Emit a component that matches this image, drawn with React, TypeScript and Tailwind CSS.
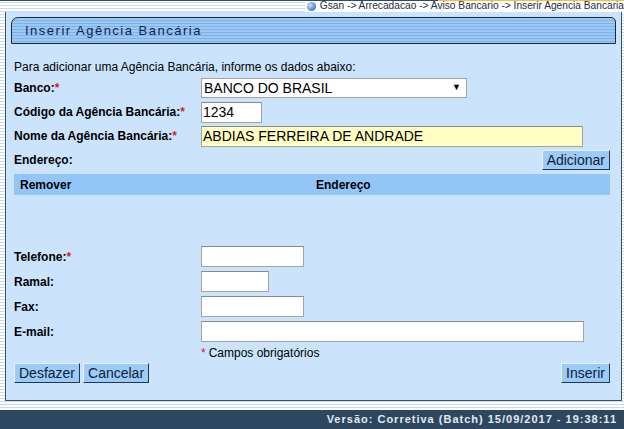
import React from 'react';

const stripes =
  'bg-[repeating-linear-gradient(180deg,#ffffff_0px,#ffffff_2px,#c9dcee_2px,#c9dcee_3px)]';

function Req() {
  return <span className="text-[#e0201c]">*</span>;
}

function Label({ children, req }: { children: React.ReactNode; req?: boolean }) {
  return (
    <div className="w-[187px] shrink-0 text-[12px] font-bold text-black">
      {children}
      {req && <Req />}
    </div>
  );
}

function Field({ w, value, yellow }: { w: string; value?: string; yellow?: boolean }) {
  return (
    <div
      className={`${w} h-[21px] border border-[#a4a4a4] border-t-[#8a8a8a] flex items-center px-[1px] text-[14px] text-black ${
        yellow ? 'bg-[#ffffc4]' : 'bg-white'
      }`}
    >
      {value}
    </div>
  );
}

function Btn({ children }: { children: React.ReactNode }) {
  return (
    <button className="h-[20px] px-[4px] bg-[#9ccbf9] border border-[#e6f2fd] border-r-[#22364c] border-b-[#22364c] text-[14px] leading-none text-[#0c1e33]">
      {children}
    </button>
  );
}

export default function App() {
  return (
    <div
      className={`w-[624px] h-[429px] overflow-hidden flex flex-col ${stripes}`}
      style={{ fontFamily: '"Liberation Sans", Arial, sans-serif' }}
    >
      {/* breadcrumb */}
      <div className="h-[12px] flex">
        <div className="w-[307px] border-t border-[#2e4a62]" />
        <div className="flex-1 bg-white flex items-center relative">
          <div className="absolute left-[133px] right-0 top-0 h-[1px] bg-[#f0c040]" />
          <div className="absolute left-0 w-[133px] top-0 h-[1px] bg-[#2e4a62]" />
          <span className="ml-[2px] w-[9px] h-[9px] shrink-0 rounded-full bg-[radial-gradient(circle_at_35%_35%,#cfe6ff,#3f7cc4_70%)]" />
          <span className="ml-[4px] text-[10.2px] leading-none text-[#1e2e40] whitespace-nowrap">
            Gsan -&gt; Arrecadacao -&gt; Aviso Bancario -&gt; Inserir Agencia Bancaria
          </span>
        </div>
      </div>

      {/* panel */}
      <div className="ml-[5px] w-[617px] h-[389px] bg-[#cbe4fc] border-l border-r border-b border-[#3d4f62] flex flex-col pt-[5px]">
        <div className="ml-[5px] w-[605px] h-[27px] border border-[#1a2840] rounded-tl-[7px] rounded-tr-[5px] bg-[repeating-linear-gradient(180deg,#9cc8f4_0px,#9cc8f4_2px,#7eb2e8_2px,#7eb2e8_3px)] flex items-center pl-[13px]">
          <span className="text-[13px] tracking-[1.5px] text-[#14244a]">Inserir Agência Bancária</span>
        </div>

        <div className="pl-[8px] pr-[11px] flex flex-col">
          <div className="h-[18px] mt-[14px] flex items-center text-[12px] text-black">
            Para adicionar uma Agência Bancária, informe os dados abaixo:
          </div>

          <div className="h-[24px] flex items-center">
            <Label req>Banco:</Label>
            <div className="w-[266px] h-[20px] bg-white border border-[#a4a4a4] flex items-center justify-between pl-[2px] pr-[5px] text-[14px] text-black">
              <span>BANCO DO BRASIL</span>
              <span className="text-[9px]">▼</span>
            </div>
          </div>

          <div className="h-[24px] flex items-center">
            <Label req>Código da Agência Bancária:</Label>
            <Field w="w-[61px]" value="1234" />
          </div>

          <div className="h-[24px] flex items-center">
            <Label req>Nome da Agência Bancária:</Label>
            <Field w="w-[382px]" value="ABDIAS FERREIRA DE ANDRADE" yellow />
          </div>

          <div className="h-[24px] flex items-center justify-between">
            <Label>Endereço:</Label>
            <Btn>Adicionar</Btn>
          </div>

          <div className="mt-[2px] h-[21px] bg-[#92c5f8] flex items-center text-[12px] font-bold text-black">
            <div className="w-[302px] pl-[6px]">Remover</div>
            <div>Endereço</div>
          </div>

          <div className="h-[49px]" />

          <div className="h-[25px] flex items-center">
            <Label req>Telefone:</Label>
            <Field w="w-[103px]" />
          </div>
          <div className="h-[25px] flex items-center">
            <Label>Ramal:</Label>
            <Field w="w-[68px]" />
          </div>
          <div className="h-[25px] flex items-center">
            <Label>Fax:</Label>
            <Field w="w-[103px]" />
          </div>
          <div className="h-[25px] flex items-center">
            <Label>E-mail:</Label>
            <Field w="w-[383px]" />
          </div>

          <div className="h-[17px] flex items-center pl-[187px] text-[12px] text-black">
            <Req />
            <span className="ml-[3px]">Campos obrigatórios</span>
          </div>

          <div className="mt-[2px] flex items-center">
            <Btn>Desfazer</Btn>
            <div className="w-[3px]" />
            <Btn>Cancelar</Btn>
            <div className="flex-1" />
            <Btn>Inserir</Btn>
          </div>
        </div>
      </div>

      <div className="flex-1" />

      {/* footer */}
      <div className="h-[19px] bg-[#2e4760] flex items-center justify-end pr-[7px]">
        <span className="text-[11px] font-bold tracking-[1px] text-[#e4e9ef]">
          Versão: Corretiva (Batch) 15/09/2017 - 19:38:11
        </span>
      </div>
    </div>
  );
}
